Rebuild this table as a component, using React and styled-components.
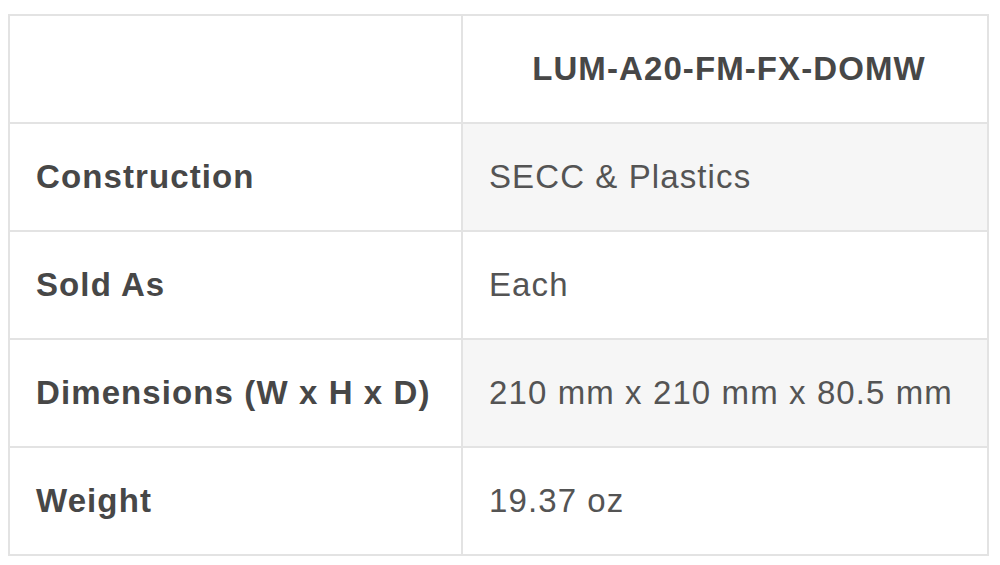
import React from 'react'
import styled, {createGlobalStyle} from 'styled-components'

const GlobalStyle = createGlobalStyle`
    html, body {
        margin: 0;
        padding: 0;
        background: #ffffff;
    }
    body {
        font-family: "Liberation Sans", Arial, sans-serif;
    }
`

const Page = styled.div`
    padding: 14px 11px 0 8px;
`

const SpecTable = styled.table`
    width: 981px;
    border-collapse: collapse;
    table-layout: fixed;
    border: 2px solid #e3e3e3;
    font-size: 33px;
    letter-spacing: 1.1px;
    color: #555555;
`

const Row = styled.tr`
    height: 108px;
`

const Cell = styled.td`
    border: 2px solid #e3e3e3;
    padding: 0 18px 0 26px;
    vertical-align: middle;
    white-space: nowrap;
    background: ${({striped}) => (striped ? '#f6f6f6' : '#ffffff')};
    font-weight: ${({bold}) => (bold ? 700 : 400)};
    color: ${({bold}) => (bold ? '#474747' : '#545454')};
    text-align: ${({center}) => (center ? 'center' : 'left')};
`

const LabelCol = styled.col`
    width: 453px;
`

const specs = [
    {label: 'Construction', value: 'SECC & Plastics'},
    {label: 'Sold As', value: 'Each'},
    {label: 'Dimensions (W x H x D)', value: '210 mm x 210 mm x 80.5 mm'},
    {label: 'Weight', value: '19.37 oz'},
]

export default function App() {
    return (
        <>
        <GlobalStyle />
        <Page>
            <SpecTable>
                <colgroup>
                    <LabelCol />
                    <col />
                </colgroup>
                <tbody>
                    <Row>
                        <Cell />
                        <Cell bold center>LUM-A20-FM-FX-DOMW</Cell>
                    </Row>
                    {specs.map((spec, index) => (
                        <Row key={index}>
                            <Cell bold>{spec.label}</Cell>
                            <Cell striped={index % 2 === 0}>{spec.value}</Cell>
                        </Row>
                    ))}
                </tbody>
            </SpecTable>
        </Page>
        </>
    )
}
